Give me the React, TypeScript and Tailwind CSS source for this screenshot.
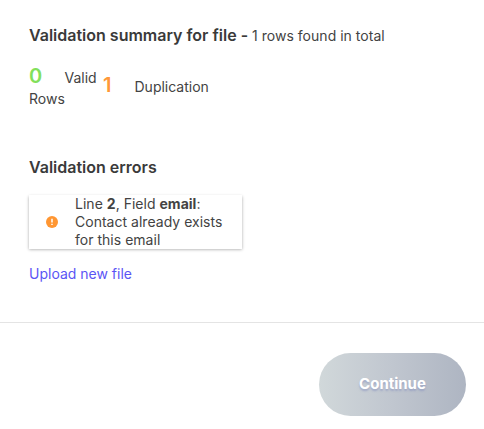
export default function App() {
  return (
    <div className="flex h-[429px] w-[484px] flex-col overflow-hidden bg-white font-[Inter,sans-serif] text-sm text-[#434343]">
      <main className="h-[323px] border-b border-[#e4e4e4] pl-[29px] pt-[24px]">
        <h2 className="text-base font-semibold leading-[22px] text-[#3a3a3a]">
          Validation summary for file -<span className="ml-[4px] text-sm font-normal tracking-[0.02px] text-[#434343]">1 rows found in total</span>
        </h2>
        <div className="mt-[18px] flex">
          <div className="w-[74px] leading-[21px]">
            <div className="flex h-[24px] items-baseline whitespace-nowrap">
              <span className="w-[35.5px] text-xl font-semibold leading-[24px] text-[#82e05a]">0</span>
              <span className="leading-[24px]">Valid</span>
            </div>
            <div>Rows</div>
          </div>
          <div className="flex h-[42px] items-baseline pt-[9px]">
            <span className="w-[31.5px] text-xl font-semibold leading-[24px] text-[#ff9838]">1</span>
            <span className="leading-[24px]">Duplication</span>
          </div>
        </div>
        <h3 className="mt-[47px] text-base font-semibold leading-[22px] text-[#3a3a3a]">Validation errors</h3>
        <div className="mt-[17px] flex h-[54px] w-[213px] items-center bg-white shadow-[0_0.5px_3px_rgba(0,0,0,0.35)]">
          <svg className="ml-[17px] mr-[17px] size-[12px] shrink-0" viewBox="0 0 12 12">
            <circle cx="6" cy="6" r="6" fill="#ff9632" />
            <path d="M6 2.7v3.9M6 7.7v1.4" stroke="#ffe5cc" strokeWidth="2" />
          </svg>
          <p className="whitespace-nowrap leading-[18px] tracking-[0.02px]">
            Line <b>2</b>, Field <b>email</b>:<br />Contact already exists<br />for this email
          </p>
        </div>
        <a className="mt-[15px] block leading-[20px] text-[#5b55f5]">Upload new file</a>
      </main>
      <footer className="flex justify-end pr-[18px] pt-[30px]">
        <button className="h-[63px] w-[147px] rounded-full bg-linear-to-r from-[#d1d8da] via-[#c0c6cf] to-[#aeb5c2] pb-[2px] text-[15px] font-bold text-white [text-shadow:0_2px_2px_rgba(130,140,190,0.55)]">Continue</button>
      </footer>
    </div>
  );
}
